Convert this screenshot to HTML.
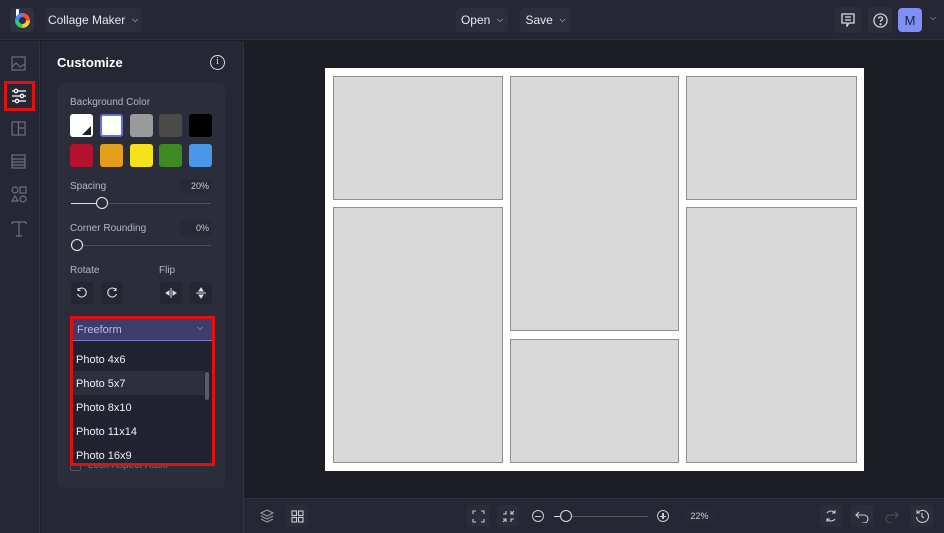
<!DOCTYPE html>
<html><head><style>
*{margin:0;padding:0;box-sizing:border-box}
body{width:944px;height:533px;background:#1c1d25;font-family:"Liberation Sans",sans-serif;color:#e6e6ee;position:relative;overflow:hidden}
.a{position:absolute}
.btn{position:absolute;background:#2c2e3c;border-radius:4px;font-size:12px;color:#e8e8f0;display:flex;align-items:center;justify-content:center}
.lbl{position:absolute;font-size:10px;color:#b4b6c4}
.sw{position:absolute;width:23px;height:23px;border-radius:3px}
.cell{position:absolute;background:#d9d9d9;border:1px solid #8f8f8f}
.ico{position:absolute;width:22px;height:22px;border-radius:3px;background:#2b2d3a;display:flex;align-items:center;justify-content:center}
.ico2{background:#242632}
.opt{position:absolute;left:76px;font-size:11px;color:#f0f0f4}
</style></head><body>
<div class="a" style="left:0;top:0;width:944px;height:40px;background:#252734;border-bottom:1px solid #30323f"></div>
<div class="a" style="left:10px;top:8px;width:24px;height:24px;border-radius:4px;background:#30323f"></div>
<div class="a" style="left:16px;top:9px;width:3px;height:10px;background:#fff;border-radius:1px"></div>
<div class="a" style="left:15px;top:13px;width:15px;height:15px;border-radius:50%;background:conic-gradient(#f44 0 25%,#fc3 0 50%,#3c6 0 75%,#48f 0)"></div>
<div class="a" style="left:19px;top:17px;width:7px;height:7px;border-radius:50%;background:#2a2c38"></div>
<div class="btn" style="left:45px;top:8px;width:96px;height:24px">Collage Maker &nbsp;<span style="font-size:8px">⌵</span></div>
<div class="btn" style="left:456px;top:8px;width:52px;height:24px">Open &nbsp;<span style="font-size:8px">⌵</span></div>
<div class="btn" style="left:520px;top:8px;width:51px;height:24px">Save &nbsp;<span style="font-size:8px">⌵</span></div>
<div class="btn" style="left:835px;top:7px;width:26px;height:26px"><svg width="14" height="14" viewBox="0 0 14 14" fill="none" stroke="#ddd" stroke-width="1.3"><path d="M1 1h12v9H8l-2 3v-3H1z M4 4h6M4 7h6"/></svg></div>
<div class="btn" style="left:868px;top:7px;width:24px;height:26px"><svg width="15" height="15" viewBox="0 0 16 16" fill="none" stroke="#ddd" stroke-width="1.3"><circle cx="8" cy="8" r="7"/><path d="M6 6a2 2 0 1 1 2.5 2c-.5.2-.5.7-.5 1.5"/><circle cx="8" cy="12" r=".5"/></svg></div>
<div class="a" style="left:898px;top:8px;width:24px;height:24px;border-radius:4px;background:#7f8ff5;color:#1e2040;font-size:13px;display:flex;align-items:center;justify-content:center">M</div>
<div class="a" style="left:930px;top:13px;font-size:8px;color:#ccc">⌵</div>
<div class="a" style="left:0;top:41px;width:40px;height:492px;background:#252734;border-right:1px solid #30323f"></div>
<svg class="a" style="left:10px;top:55px" width="18" height="190" viewBox="0 0 18 190" fill="none" stroke="#6c6f80" stroke-width="1.2">
<rect x="2" y="2" width="13" height="13"/><path d="M2 12l4-4 4 4 5-3"/>
<rect x="2" y="67" width="13" height="13"/><path d="M8.5 67v13M8.5 73h6.5"/>
<rect x="2" y="100" width="13" height="13"/><path d="M2 104h13M2 107h13M2 110h13"/>
<circle cx="5" cy="135" r="3"/><rect x="10" y="132" width="6" height="6"/><path d="M5 141l-3 5h6z"/><circle cx="13" cy="144" r="3"/>
<path d="M2 167h14M9 167v14M6 181h6M2 167v2M16 167v2"/>
</svg>
<div class="a" style="left:4px;top:81px;width:31px;height:30px;border:3px solid #e01010"></div>
<svg class="a" style="left:11px;top:88px" width="16" height="16" viewBox="0 0 16 16" fill="none" stroke="#fff" stroke-width="1.3"><path d="M1 3h14M1 8h14M1 13h14"/><circle cx="5" cy="3" r="1.7" fill="#252734"/><circle cx="11" cy="8" r="1.7" fill="#252734"/><circle cx="6" cy="13" r="1.7" fill="#252734"/></svg>
<div class="a" style="left:41px;top:41px;width:203px;height:492px;background:#252734;border-right:1px solid #30323f"></div>
<div class="a" style="left:57px;top:55px;font-size:13px;font-weight:bold;color:#fff">Customize</div>
<div class="a" style="left:210px;top:55px;width:15px;height:15px;border:1.3px solid #ddd;border-radius:50%;font-size:10px;text-align:center;line-height:12px;color:#ddd;font-family:'Liberation Serif',serif">i</div>
<div class="a" style="left:57px;top:83px;width:168px;height:405px;background:#2b2d3b;border-radius:6px"></div>
<div class="lbl" style="left:70px;top:97px">Background Color</div>
<div class="sw" style="left:70px;top:114px;background:#fff;overflow:hidden"><div style="position:absolute;right:2px;bottom:2px;width:0;height:0;border-left:9px solid transparent;border-bottom:9px solid #222"></div></div>
<div class="sw" style="left:100px;top:114px;background:#fff;border:2px solid #6670d8"></div>
<div class="sw" style="left:130px;top:114px;background:#9a9a9a"></div>
<div class="sw" style="left:159px;top:114px;background:#4a4a4a"></div>
<div class="sw" style="left:189px;top:114px;background:#000"></div>
<div class="sw" style="left:70px;top:144px;background:#b5102e"></div>
<div class="sw" style="left:100px;top:144px;background:#e29f1b"></div>
<div class="sw" style="left:130px;top:144px;background:#f6e21c"></div>
<div class="sw" style="left:159px;top:144px;background:#3e8a22"></div>
<div class="sw" style="left:189px;top:144px;background:#4a96e8"></div>
<div class="lbl" style="left:70px;top:181px">Spacing</div>
<div class="a" style="left:180px;top:179px;width:32px;height:14px;background:#272937;font-size:9px;color:#ccc;text-align:right;padding-right:3px;line-height:14px">20%</div>
<div class="a" style="left:71px;top:203px;width:140px;height:1px;background:#4c4e5c"></div>
<div class="a" style="left:71px;top:203px;width:31px;height:1px;background:#ddd"></div>
<div class="a" style="left:96px;top:197px;width:12px;height:12px;border-radius:50%;border:1.5px solid #eee;background:#2b2d3b"></div>
<div class="lbl" style="left:70px;top:223px">Corner Rounding</div>
<div class="a" style="left:180px;top:221px;width:32px;height:14px;background:#272937;font-size:9px;color:#ccc;text-align:right;padding-right:3px;line-height:14px">0%</div>
<div class="a" style="left:71px;top:245px;width:140px;height:1px;background:#4c4e5c"></div>
<div class="a" style="left:71px;top:239px;width:12px;height:12px;border-radius:50%;border:1.5px solid #eee;background:#2b2d3b"></div>
<div class="lbl" style="left:70px;top:265px">Rotate</div>
<div class="lbl" style="left:159px;top:265px">Flip</div>
<div class="ico ico2" style="left:71px;top:282px"><svg width="12" height="12" viewBox="0 0 12 12" fill="none" stroke="#ddd" stroke-width="1.1"><path d="M2 3a4.5 4.5 0 1 1-.5 4M2 1v2.5h2.5"/></svg></div>
<div class="ico ico2" style="left:101px;top:282px"><svg width="12" height="12" viewBox="0 0 12 12" fill="none" stroke="#ddd" stroke-width="1.1"><path d="M10 3a4.5 4.5 0 1 0 .5 4M10 1v2.5H7.5"/></svg></div>
<div class="ico ico2" style="left:160px;top:282px"><svg width="12" height="12" viewBox="0 0 12 12" fill="#ddd" stroke="#ddd" stroke-width="1"><path d="M6 1v10"/><path d="M1 6l3-2v4zM11 6l-3-2v4z"/></svg></div>
<div class="ico ico2" style="left:190px;top:282px"><svg width="12" height="12" viewBox="0 0 12 12" fill="#ddd" stroke="#ddd" stroke-width="1"><path d="M1 6h10"/><path d="M6 1l-2 3h4zM6 11l-2-3h4z"/></svg></div>
<div class="a" style="left:70px;top:460px;width:11px;height:11px;border:1px solid #555;border-radius:2px"></div>
<div class="a" style="left:88px;top:460px;font-size:10px;color:#777">Lock Aspect Ratio</div>
<div class="a" style="left:70px;top:316px;width:145px;height:150px;background:#222330;border:3px solid #e01010"></div>
<div class="a" style="left:73px;top:319px;width:139px;height:22px;background:#3d3c6a;border-bottom:1px solid #7a7cc0"></div>
<div class="a" style="left:77px;top:324px;font-size:11px;color:#b9bcf0">Freeform</div>
<div class="a" style="left:197px;top:323px;font-size:8px;color:#ccc">⌵</div>
<div class="a" style="left:73px;top:371px;width:131px;height:24px;background:#2e2f3d"></div>
<div class="a" style="left:205px;top:372px;width:4px;height:28px;border-radius:2px;background:#5a5c6a"></div>
<div class="opt" style="top:354px">Photo 4x6</div>
<div class="opt" style="top:378px">Photo 5x7</div>
<div class="opt" style="top:402px">Photo 8x10</div>
<div class="opt" style="top:426px">Photo 11x14</div>
<div class="opt" style="top:450px">Photo 16x9</div>
<div class="a" style="left:325px;top:68px;width:539px;height:403px;background:#fff"></div>
<div class="cell" style="left:333px;top:76px;width:170px;height:124px"></div>
<div class="cell" style="left:333px;top:207px;width:170px;height:256px"></div>
<div class="cell" style="left:510px;top:76px;width:169px;height:255px"></div>
<div class="cell" style="left:510px;top:339px;width:169px;height:124px"></div>
<div class="cell" style="left:686px;top:76px;width:171px;height:124px"></div>
<div class="cell" style="left:686px;top:207px;width:171px;height:256px"></div>
<div class="a" style="left:244px;top:498px;width:700px;height:35px;background:#252734;border-top:1px solid #30323f"></div>
<div class="ico" style="left:256px;top:505px;background:none"><svg width="14" height="14" viewBox="0 0 14 14" fill="none" stroke="#999" stroke-width="1.1"><path d="M7 1l6 3-6 3-6-3z M1 7l6 3 6-3M1 10l6 3 6-3"/></svg></div>
<div class="ico" style="left:286px;top:505px"><svg width="13" height="13" viewBox="0 0 13 13" fill="none" stroke="#ccc" stroke-width="1.1"><rect x="1" y="1" width="4.5" height="4.5"/><rect x="7.5" y="1" width="4.5" height="4.5"/><rect x="1" y="7.5" width="4.5" height="4.5"/><rect x="7.5" y="7.5" width="4.5" height="4.5"/></svg></div>
<div class="ico" style="left:467px;top:505px"><svg width="13" height="13" viewBox="0 0 13 13" fill="none" stroke="#ccc" stroke-width="1.1"><path d="M1 4V1h3M9 1h3v3M12 9v3H9M4 12H1V9"/></svg></div>
<div class="ico" style="left:497px;top:505px"><svg width="13" height="13" viewBox="0 0 13 13" fill="none" stroke="#ccc" stroke-width="1.1"><path d="M1 4h3V1M9 1v3h3M12 9H9v3M4 12V9H1M9 4l3-3M4 9l-3 3"/></svg></div>
<div class="a" style="left:532px;top:510px;width:12px;height:12px;border:1.2px solid #ccc;border-radius:50%"></div>
<div class="a" style="left:535px;top:515.5px;width:6px;height:1.2px;background:#ccc"></div>
<div class="a" style="left:554px;top:516px;width:94px;height:1px;background:#555"></div>
<div class="a" style="left:554px;top:516px;width:10px;height:1px;background:#ddd"></div>
<div class="a" style="left:560px;top:510px;width:12px;height:12px;border-radius:50%;border:1.3px solid #ddd;background:#252734"></div>
<div class="a" style="left:657px;top:510px;width:12px;height:12px;border:1.2px solid #ccc;border-radius:50%"></div>
<div class="a" style="left:660px;top:515.5px;width:6px;height:1.2px;background:#ccc"></div>
<div class="a" style="left:662.4px;top:513px;width:1.2px;height:6px;background:#ccc"></div>
<div class="a" style="left:682px;top:508px;width:35px;height:16px;background:#272937;font-size:9px;color:#ccc;text-align:center;line-height:16px">22%</div>
<div class="ico" style="left:820px;top:505px"><svg width="14" height="14" viewBox="0 0 14 14" fill="none" stroke="#ccc" stroke-width="1.1"><path d="M3 4a5 5 0 0 1 8 0M11 10a5 5 0 0 1-8 0M11 1v3H8M3 13v-3h3"/></svg></div>
<div class="ico" style="left:851px;top:505px"><svg width="14" height="14" viewBox="0 0 14 14" fill="none" stroke="#ccc" stroke-width="1.1"><path d="M4 3L1 6l3 3M1 6h8a4 4 0 0 1 0 8H7"/></svg></div>
<div class="ico" style="left:881px;top:505px;background:none"><svg width="14" height="14" viewBox="0 0 14 14" fill="none" stroke="#555" stroke-width="1.1"><path d="M10 3l3 3-3 3M13 6H5a4 4 0 0 0 0 8h2"/></svg></div>
<div class="ico" style="left:911px;top:505px"><svg width="14" height="14" viewBox="0 0 14 14" fill="none" stroke="#ccc" stroke-width="1.1"><path d="M2.5 4A6 6 0 1 1 1.5 8M2 1v3h3M7 4v3.5l2 1.5"/></svg></div>
</body></html>
